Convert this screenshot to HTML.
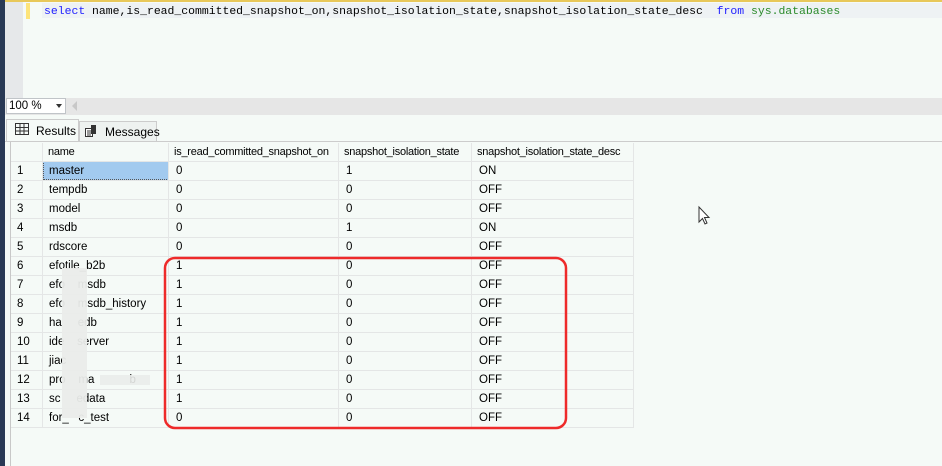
<!DOCTYPE html>
<html><head><style>
*{margin:0;padding:0;box-sizing:border-box}
body{width:942px;height:466px;overflow:hidden;background:#f5faf7;font-family:"Liberation Sans",sans-serif;position:relative}
.a{position:absolute}
.code{font-family:"Liberation Mono",monospace;font-size:11.45px;color:#000;white-space:pre}
.grid div{position:absolute;font-size:11.5px;color:#000;white-space:nowrap}
.grid .h{font-size:11px;letter-spacing:-0.25px}
</style></head><body>
<div class="a" style="left:0;top:0;width:5px;height:466px;background:#293955"></div>
<div class="a" style="left:5px;top:0;width:937px;height:2px;background:#e8c85a"></div>
<div class="a" style="left:5px;top:2px;width:18px;height:96px;background:#e6e8ea"></div>
<div class="a" style="left:26px;top:3px;width:4px;height:16px;background:#fde47a"></div>
<div class="a" style="left:42px;top:3px;width:900px;height:15px;background:#eef2f4"></div>
<div class="a code" style="left:44px;top:5px"><span style="color:#1d1dff">select</span> name,is_read_committed_snapshot_on,snapshot_isolation_state,snapshot_isolation_state_desc  <span style="color:#1d1dff">from</span> <span style="color:#2a8a2a">sys.databases</span></div>
<div class="a" style="left:5px;top:98px;width:937px;height:17px;background:#e6e6e6"></div>
<div class="a" style="left:6px;top:98px;width:60px;height:16px;background:#fff;border:1px solid #c0c4c8;font-size:11.5px;padding:1px 2px">100 %<span style="position:absolute;right:3px;top:5px;border:3px solid transparent;border-top:4px solid #333"></span></div>
<div class="a" style="top:101px;border:5px solid transparent;border-right:5px solid #c8c8c8;width:0;height:0;left:67px"></div>
<div class="a" style="left:6px;top:119px;width:73px;height:23px;background:#f5faf7;border:1px solid #ccc;border-bottom:none;font-size:12px;padding:4px 0 0 29px">Results</div>
<svg class="a" style="left:15px;top:123px" width="14" height="12"><rect x=".5" y=".5" width="13" height="11" fill="none" stroke="#333"/><path d="M1 4.5H13M1 8H13M5 1V12M9 1V12" stroke="#333"/></svg>
<div class="a" style="left:79px;top:121px;width:78px;height:21px;background:#eef2f0;border:1px solid #ccc;border-bottom:none;font-size:12px;padding:3px 0 0 25px">Messages</div>
<svg class="a" style="left:84px;top:124px" width="14" height="14"><rect x="1.5" y="4.5" width="7" height="8" fill="#fff" stroke="#333"/><rect x="7" y="1" width="5" height="9" fill="#333"/><path d="M3 7H7M3 9H7M3 11H7" stroke="#333"/></svg>
<div class="a" style="left:5px;top:141px;width:937px;height:1px;background:#ccc"></div>
<div class="a" style="left:10px;top:142px;width:1px;height:324px;background:#c8c8c8"></div>
<div class="a grid" style="left:0;top:0">
<div style="left:43px;top:161px;width:126px;height:19px;background:#a2caef;border:1px dotted #555"></div>
<div class="h" style="left:48px;top:146px">name</div><div class="h" style="left:174px;top:146px">is_read_committed_snapshot_on</div><div class="h" style="left:344px;top:146px">snapshot_isolation_state</div><div class="h" style="left:477px;top:146px">snapshot_isolation_state_desc</div>
</div>
<svg class="a" style="left:0;top:0" width="942" height="466">
<g stroke="#e4e6e6" stroke-width="1">
<path d="M11 161.5H634M11 180.5H634M11 199.5H634M11 218.5H634M11 237.5H634M11 256.5H634M11 275.5H634M11 294.5H634M11 313.5H634M11 332.5H634M11 351.5H634M11 370.5H634M11 389.5H634M11 408.5H634M11 427.5H634"/>
<path d="M42.5 143V427M168.5 143V427M338.5 143V427M471.5 143V427M633.5 143V427"/>
</g>
</svg>
<div class="a grid" id="g"></div>
<svg class="a" style="left:0;top:0" width="942" height="466">
<rect x="165" y="258" width="401" height="170" rx="10" fill="none" stroke="#ee2a2a" stroke-width="2.5"/>
<path d="M699 207V222L702.5 218.5L705 224L707 223L704.5 217.5H709Z" fill="#fff" stroke="#333"/>
<rect x="62" y="268" width="25" height="150" fill="#eaecea" opacity=".95"/>
<rect x="100" y="375" width="50" height="10" fill="#eaecea" opacity=".9"/>
</svg>
<script>
var d=[["master",0,1,"ON"],["tempdb",0,0,"OFF"],["model",0,0,"OFF"],["msdb",0,1,"ON"],["rdscore",0,0,"OFF"],["efotile_b2b",1,0,"OFF"],["efo    msdb",1,0,"OFF"],["efo    msdb_history",1,0,"OFF"],["ha     edb",1,0,"OFF"],["ide    server",1,0,"OFF"],["jiac",1,0,"OFF"],["pro    ma           b",1,0,"OFF"],["sc     edata",1,0,"OFF"],["for_   c_test",0,0,"OFF"]];
var h="";d.forEach(function(r,i){var y=165+i*19;h+='<div style="left:17px;top:'+y+'px">'+(i+1)+'</div><div style="left:49px;top:'+y+'px;white-space:pre">'+r[0]+'</div><div style="left:176px;top:'+y+'px">'+r[1]+'</div><div style="left:346px;top:'+y+'px">'+r[2]+'</div><div style="left:479px;top:'+y+'px">'+r[3]+'</div>'});
document.getElementById("g").innerHTML=h;
</script>
</body></html>
